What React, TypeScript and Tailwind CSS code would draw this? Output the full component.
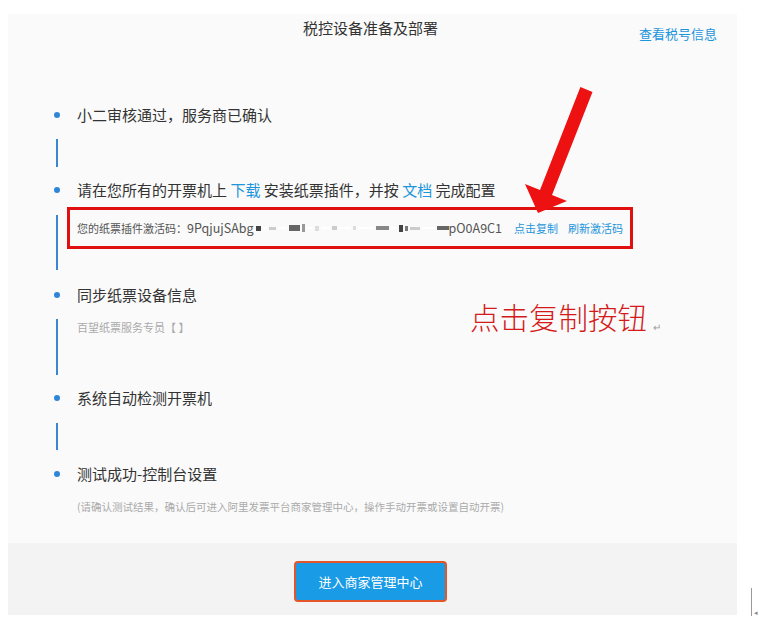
import React from 'react'

const font = { fontFamily: '"Noto Sans CJK SC", "Noto Sans", sans-serif' }

// blurred-out part of the activation code: [width, colour, height]
const blurBlocks: [number, string, number][] = [
  [6, '#444', 5], [4, '#fff', 2], [7, '#ccc', 3], [9, '#fff', 2], [12, '#666', 6], [3, '#999', 8], [6, '#fff', 2],
  [4, '#ddd', 5], [10, '#fff', 2], [5, '#ccc', 4], [12, '#fff', 2], [4, '#ddd', 4], [16, '#fff', 2],
  [14, '#888', 4], [6, '#fff', 2], [4, '#444', 7], [3, '#777', 5], [10, '#ccc', 3], [14, '#fff', 2], [12, '#666', 4],
]

const Dot = () => (
  <div className="w-[10px] flex justify-center">
    <div className="w-[6px] h-[6px] rounded-full bg-[#2f86d6]" />
  </div>
)

const StepTitle = ({ children, className = '' }: { children: React.ReactNode; className?: string }) => (
  <div className={`h-[24px] flex items-center ${className}`}>
    <Dot />
    <div className="pl-[15px] text-[15px] text-[#333]">{children}</div>
  </div>
)

const Line = ({ className }: { className: string }) => (
  <div className="w-[10px] flex justify-center items-start">
    <div className={`w-[2px] bg-[#3a86d0] ${className}`} />
  </div>
)

export default function App() {
  return (
    <div className="relative w-[759px] h-[627px] bg-white pt-[14px]" style={font}>
      <div className="flex items-end">
        <div className="ml-[8px] w-[729px] bg-[#fafafa] flex flex-col">
          <div className="h-[529px] flex flex-col">
            <div className="h-[34px] pt-[4px] grid grid-cols-[1fr_auto_1fr] items-start">
              <div />
              <div className="text-[15px] leading-[20px] text-[#333] pr-[4px]">税控设备准备及部署</div>
              <div className="justify-self-end pr-[20px] pt-[7px] text-[13px] leading-[18px] text-[#1d95dc]">查看税号信息</div>
            </div>

            <div className="pl-[44px] mt-[55px] flex flex-col">
              <StepTitle>小二审核通过，服务商已确认</StepTitle>
              <div className="flex mt-[12px]">
                <Line className="h-[28px]" />
              </div>

              <StepTitle className="mt-[11px]">
                请在您所有的开票机上 <span className="text-[#1d95dc]">下载</span> 安装纸票插件，并按{' '}
                <span className="text-[#1d95dc]">文档</span> 完成配置
              </StepTitle>
              <div className="flex mt-[5px]">
                <Line className="mt-[8px] h-[55px]" />
                <div className="ml-[5px] w-[566px] h-[42px] border-[3px] border-[#e01010] pl-[7px] flex items-center text-[11px] text-[#555]">
                  <span>您的纸票插件激活码：</span>
                  <span className="text-[12.5px]">9PqjujSAbg</span>
                  <span className="inline-flex items-center gap-[2px] ml-[2px] w-[193px]">
                    {blurBlocks.map(([w, c, h], i) => (
                      <span key={i} className="inline-block" style={{ width: w, height: h, background: c }} />
                    ))}
                  </span>
                  <span className="text-[12.5px]">pO0A9C1</span>
                  <span className="ml-[12px] text-[#1d95dc]">点击复制</span>
                  <span className="ml-[10px] text-[#1d95dc]">刷新激活码</span>
                </div>
              </div>

              <StepTitle className="mt-[13px]">同步纸票设备信息</StepTitle>
              <div className="flex mt-[12px]">
                <Line className="h-[56px]" />
                <div className="ml-[5px] pl-[10px] text-[11px] leading-[16px] text-[#aaa]">百望纸票服务专员【 】</div>
              </div>

              <StepTitle className="mt-[11px]">系统自动检测开票机</StepTitle>
              <div className="flex mt-[13px]">
                <Line className="h-[27px]" />
              </div>

              <StepTitle className="mt-[12px]">测试成功-控制台设置</StepTitle>
              <div className="flex mt-[13px]">
                <div className="w-[10px]" />
                <div className="ml-[5px] pl-[10px] text-[10.5px] leading-[16px] text-[#aaa]">
                  (请确认测试结果，确认后可进入阿里发票平台商家管理中心，操作手动开票或设置自动开票)
                </div>
              </div>
            </div>
          </div>

          <div className="h-[72px] bg-[#f3f3f3] pt-[18px] pr-[4px] flex justify-center items-start">
            <button className="w-[153px] h-[41px] bg-[#1a9be6] border-2 border-[#e2562a] rounded-[4px] text-white text-[13px]">
              进入商家管理中心
            </button>
          </div>
        </div>

        <div className="ml-[14px] mb-[-1px] flex items-end">
          <div className="w-px h-[28px] bg-[#999]" />
          <span className="text-[7px] leading-[8px] text-[#888] ml-[2px]">◂</span>
        </div>
      </div>

      {/* annotation */}
      <div className="absolute left-[470px] top-[302px] flex items-end">
        <span className="text-[29.5px] leading-none text-[#d41a1a] font-light">点击复制按钮</span>
        <span className="ml-[6px] text-[10px] leading-none text-[#999]">↵</span>
      </div>
      <svg className="absolute left-0 top-0 pointer-events-none" width="759" height="627">
        <polygon
          points="580.4,87.1 592.5,91.9 552,195 567,201 538,213 525,184 540,190"
          fill="#ee1111"
        />
      </svg>
    </div>
  )
}
